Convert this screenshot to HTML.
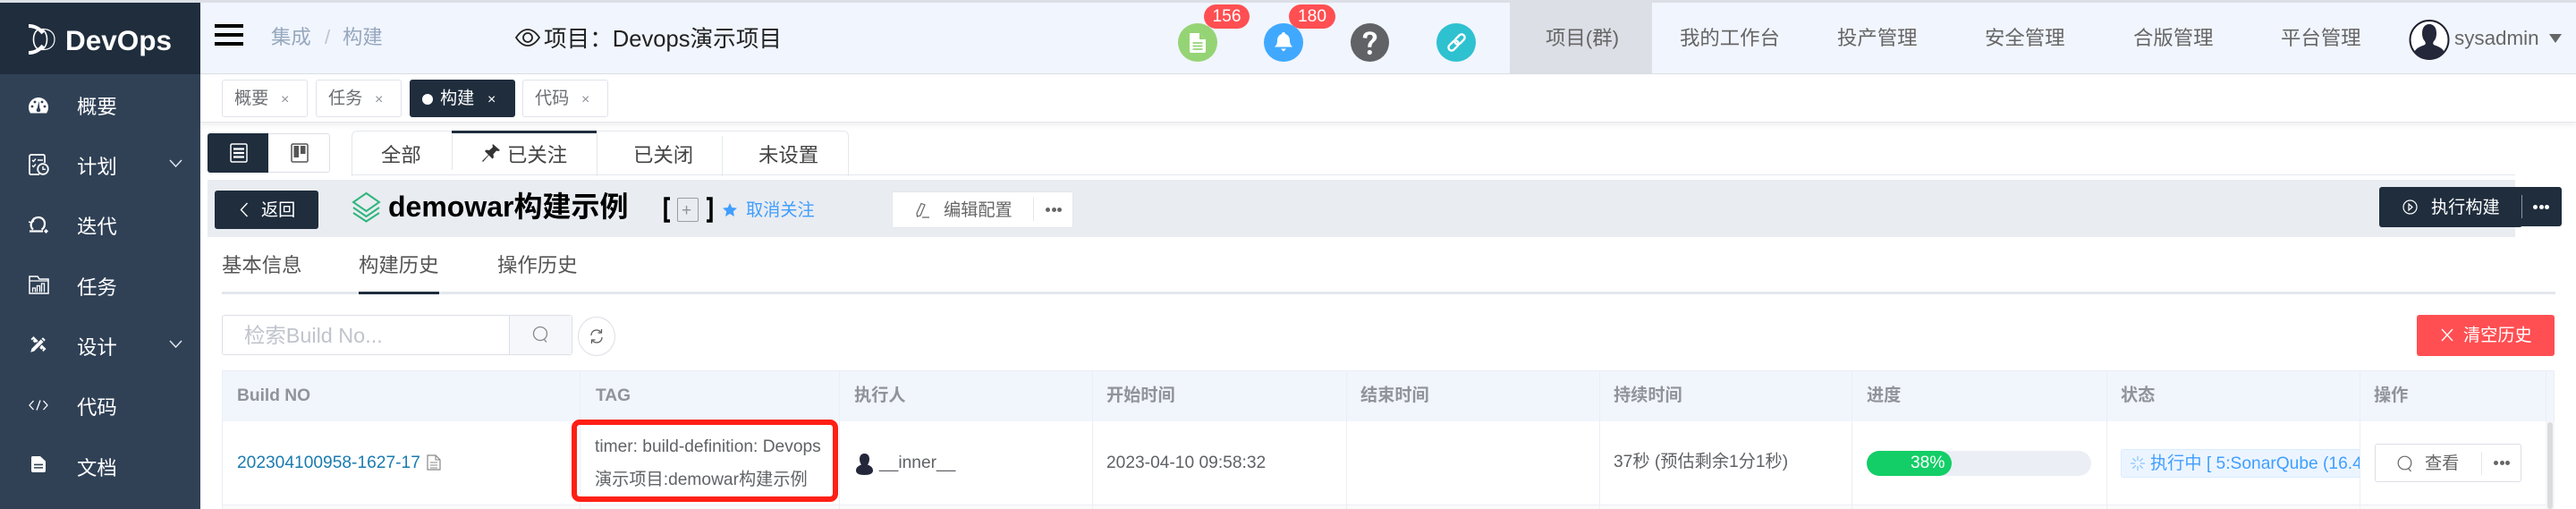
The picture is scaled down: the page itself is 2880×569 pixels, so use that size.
<!DOCTYPE html>
<html lang="zh"><head><meta charset="utf-8"><title>DevOps</title>
<style>
*{box-sizing:border-box}
html,body{margin:0;padding:0;width:2880px;height:569px;overflow:hidden;background:#fff}
body{position:relative;font-family:"Liberation Sans","Noto Sans CJK SC",sans-serif;color:#606266}
.a{position:absolute}
.t{position:absolute;white-space:nowrap;line-height:30px;height:30px}
svg{position:absolute;display:block}
.s{font-size:22.4px;color:#fff}
.m{font-size:22.4px;color:#666}
.tag{position:absolute;top:89px;height:42px;width:96px;border:1px solid #e0e3ea;border-radius:3px;background:#fff}
.th{font-size:19.2px;font-weight:bold;color:#909399}
.td{font-size:19.2px;color:#606266}
.v{position:absolute;width:1px;background:#ebeef5}
.dots{position:absolute;font-size:0}
.dots i{display:inline-block;width:5px;height:5px;border-radius:50%;background:currentColor;margin-right:1.5px}
</style></head><body>

<!-- top strip / header -->
<div class="a" style="left:0;top:0;width:2880px;height:3px;background:#dcdfe6"></div>
<div class="a" style="left:224px;top:3px;width:2656px;height:80px;background:#f1f5fe;border-bottom:1px solid #dcdfe6"></div>

<!-- sidebar -->
<div class="a" style="left:0;top:3px;width:224px;height:80px;background:#1f2d3d"></div>
<div class="a" style="left:0;top:83px;width:224px;height:486px;background:#304156"></div>
<svg style="left:30px;top:26px" width="34" height="36" viewBox="0 0 34 36"><path d="M2 3C9 3 14 6 18 11M2 33C9 33 14 30 18 25" fill="none" stroke="#fff" stroke-width="4"/><ellipse cx="15" cy="18" rx="7.500" ry="11.500" fill="none" stroke="#fff" stroke-width="1.600"/><path d="M17 6.500C26 6 31 11 31 18S26 30 17 29.500" fill="none" stroke="#fff" stroke-width="1.200"/></svg>
<div class="t" style="left:73px;top:30px;font-size:31.5px;font-weight:bold;color:#fff">DevOps</div>

<svg style="left:32px;top:107px" width="22" height="22" viewBox="0 0 22 22"><path d="M11 2C5 2 0 7 0 13c0 3 1 5 2 6.500h18c1-1.500 2-3.500 2-6.500C22 7 17 2 11 2z" fill="#fff"/><circle cx="4" cy="12" r="1.400" fill="#304156"/><circle cx="7" cy="7" r="1.400" fill="#304156"/><circle cx="15" cy="7" r="1.400" fill="#304156"/><circle cx="18" cy="12" r="1.400" fill="#304156"/><path d="M11.500 6l1 9h-3z" fill="#304156"/><circle cx="11" cy="16" r="2.300" fill="#304156"/></svg>
<div class="t s" style="left:86px;top:105px">概要</div>

<svg style="left:32px;top:172px" width="23" height="24" viewBox="0 0 23 24"><path d="M12 23H2.500Q1 23 1 21.500V3Q1 1 3 1h13q2 0 2 2v7" fill="none" stroke="#fff" stroke-width="1.800"/><path d="M4 7l1.500 1.500L8 5.500M4 13l1.500 1.500L8 11.500" fill="none" stroke="#fff" stroke-width="1.400"/><path d="M10 7h6" stroke="#fff" stroke-width="1.500"/><circle cx="16" cy="17" r="5.800" fill="#304156" stroke="#fff" stroke-width="1.800"/><path d="M16 14v3.300h3" fill="none" stroke="#fff" stroke-width="1.400"/></svg>
<div class="t s" style="left:86px;top:172px">计划</div>
<svg style="left:189px;top:178px" width="15" height="10" viewBox="0 0 15 10"><path d="M1 1l6.500 7L14 1" fill="none" stroke="#dfe4ed" stroke-width="1.500"/></svg>

<svg style="left:32px;top:241px" width="23" height="21" viewBox="0 0 23 21"><path d="M5 15.500C2.500 13.500 2 10 3.500 7 5 3.500 8 2 11 2c4 0 7 3 7 7 0 3-1.500 5.500-3.500 6.500" fill="none" stroke="#fff" stroke-width="2.200"/><path d="M0 7l3.500 1L6 5.500" fill="none" stroke="#fff" stroke-width="1.500"/><path d="M1 17.500h15" stroke="#fff" stroke-width="2.200"/><path d="M17 17.500l2.500-2.500 2.500 2.500-2.500 2.500z" fill="#fff"/></svg>
<div class="t s" style="left:86px;top:239px">迭代</div>

<svg style="left:32px;top:307px" width="23" height="22" viewBox="0 0 23 22"><path d="M1 21V2h9l2 3h10v16z" fill="none" stroke="#fff" stroke-width="1.500"/><path d="M1 7h21" stroke="#fff" stroke-width="1.300"/><path d="M4.500 19.500V15h3v4.500M9.500 19.500V12.500h3v7M14.500 19.500v-9.500h3v9.500" fill="none" stroke="#fff" stroke-width="1.300"/></svg>
<div class="t s" style="left:86px;top:307px">任务</div>

<svg style="left:33px;top:375px" width="20" height="20" viewBox="0 0 20 20"><path d="M1.500 4L4.500 1 18.500 15 15.500 18z" fill="#fff"/><path d="M4.500 4.500l-1.500 1.500M7.500 7.500l-1.500 1.500M12 12l-1.500 1.500M15 15l-1.500 1.500" stroke="#304156" stroke-width="1.100"/><path d="M15 1.500l3.500 3.500L5.500 18 0.500 19.500 2 14.500z" fill="#fff" stroke="#304156" stroke-width="1"/><path d="M13 4l3 3" stroke="#304156" stroke-width="1"/></svg>
<div class="t s" style="left:86px;top:374px">设计</div>
<svg style="left:189px;top:380px" width="15" height="10" viewBox="0 0 15 10"><path d="M1 1l6.500 7L14 1" fill="none" stroke="#dfe4ed" stroke-width="1.500"/></svg>

<svg style="left:32px;top:447px" width="22" height="12" viewBox="0 0 22 12"><path d="M5.500 1L1 6l4.500 5M16.500 1L21 6l-4.500 5M13 0.500L9 11.500" fill="none" stroke="#fff" stroke-width="1.300"/></svg>
<div class="t s" style="left:86px;top:441px">代码</div>

<svg style="left:35px;top:510px" width="16" height="18" viewBox="0 0 16 21" preserveAspectRatio="none"><path d="M1.500 0H10l6 6.500V19q0 2-2 2H2q-2 0-2-2V2Q0 0 1.500 0z" fill="#fff"/><path d="M3 11h10M3 15h10" stroke="#304156" stroke-width="1.800"/></svg>
<div class="t s" style="left:86px;top:509px">文档</div>

<!-- header left -->
<div class="a" style="left:240px;top:27px;width:32px;height:4px;background:#000"></div>
<div class="a" style="left:240px;top:37px;width:32px;height:4px;background:#000"></div>
<div class="a" style="left:240px;top:47px;width:32px;height:4px;background:#000"></div>
<div class="t" style="left:303px;top:27px;font-size:22.4px;color:#97a8be">集成</div>
<div class="t" style="left:363px;top:27px;font-size:22.4px;color:#c0c4cc">/</div>
<div class="t" style="left:383px;top:27px;font-size:22.4px;color:#97a8be">构建</div>
<svg style="left:576px;top:32px" width="28" height="20" viewBox="0 0 28 20"><path d="M1 10C5 4 9 1 14 1s9 3 13 9c-4 6-8 9-13 9S5 16 1 10z" fill="none" stroke="#222" stroke-width="1.800"/><circle cx="14" cy="10" r="5" fill="none" stroke="#222" stroke-width="1.800"/></svg>
<div class="t" style="left:608px;top:29px;font-size:25.6px;color:#222">项目：Devops演示项目</div>

<!-- header icons -->
<div class="a" style="left:1317px;top:26px;width:44px;height:43px;border-radius:50%;background:#95d475"></div>
<svg style="left:1330px;top:37px" width="18" height="22" viewBox="0 0 18 22"><path d="M1 0h10l7 7v13q0 2-2 2H2q-2 0-2-2V1Q0 0 1 0z" fill="#fff"/><path d="M11 0v7h7" fill="#95d475"/><path d="M3.500 11h11M3.500 14.500h11M3.500 18h11" stroke="#95d475" stroke-width="1.700"/></svg>
<div class="a" style="left:1346px;top:5px;width:51px;height:27px;border-radius:14px;background:#ff4f52;color:#fff;font-size:19.2px;line-height:27px;text-align:center">156</div>

<div class="a" style="left:1413px;top:26px;width:44px;height:43px;border-radius:50%;background:#40a9ff"></div>
<svg style="left:1425px;top:36px" width="20" height="23" viewBox="0 0 20 23"><path d="M10 0c1.200 0 2 .8 2 2 3.500 1 5 4 5 7.500 0 3 1 5 3 7H0c2-2 3-4 3-7C3 6 4.500 3 8 2c0-1.200.8-2 2-2z" fill="#fff"/><path d="M7 18.500h6l-3 3z" fill="#fff"/></svg>
<div class="a" style="left:1441px;top:5px;width:52px;height:27px;border-radius:14px;background:#ff4f52;color:#fff;font-size:19.2px;line-height:27px;text-align:center">180</div>

<div class="a" style="left:1510px;top:26px;width:43px;height:43px;border-radius:50%;background:#606266"></div>
<svg style="left:1521px;top:33px" width="21" height="30" viewBox="0 0 21 30"><path d="M3 9c0-4 3-6.500 7.500-6.500S18 5 18 8.500c0 5-6 5-6 11h-3.500c0-7 5.500-7 5.500-11 0-1.800-1.500-3-3.500-3S7 7 7 9.500z" fill="#fff" stroke="#fff" stroke-width=".6"/><circle cx="10.300" cy="25.500" r="2.600" fill="#fff"/></svg>

<div class="a" style="left:1606px;top:26px;width:44px;height:43px;border-radius:50%;background:#2ec1d0"></div>
<svg style="left:1616px;top:36px" width="24" height="24" viewBox="0 0 24 24"><g fill="none" stroke="#fff" stroke-width="2.400"><rect x="-4" y="-3.500" width="13" height="7" rx="3.500" transform="translate(8 16) rotate(-45) translate(-1 0)"/><rect x="-6.500" y="-3.500" width="13" height="7" rx="3.500" transform="translate(16 8) rotate(-45)"/></g></svg>

<!-- header menu -->
<div class="a" style="left:1688px;top:3px;width:159px;height:79px;background:#dcdfe6"></div>
<div class="t m" style="left:1728px;top:28px">项目(群)</div>
<div class="t m" style="left:1878px;top:28px">我的工作台</div>
<div class="t m" style="left:2054px;top:28px">投产管理</div>
<div class="t m" style="left:2219px;top:28px">安全管理</div>
<div class="t m" style="left:2385px;top:28px">合版管理</div>
<div class="t m" style="left:2550px;top:28px">平台管理</div>
<svg style="left:2693px;top:22px" width="46" height="45" viewBox="0 0 46 45"><circle cx="23" cy="22.500" r="21.500" fill="#fff" stroke="#1f1f2e" stroke-width="2"/><path d="M6 37c2-6 8-7 12-9 1-1 1-2 0-4-2-2-3-5-3-9 0-6 3-10 8-10s8 4 8 10c0 4-1 7-3 9-1 2-1 3 0 4 4 2 10 3 12 9-4 5-10 7.500-17 7.500S10 42 6 37z" fill="#24263a"/></svg>
<div class="t m" style="left:2744px;top:28px">sysadmin</div>
<svg style="left:2850px;top:38px" width="14" height="10" viewBox="0 0 14 10"><path d="M0 0h14L7 10z" fill="#666"/></svg>

<!-- tags bar -->
<div class="a" style="left:224px;top:83px;width:2656px;height:54px;background:#fff;border-bottom:1px solid #e4e7ed;box-shadow:0 3px 6px rgba(0,0,0,.07)"></div>
<div class="tag" style="left:248px"></div>
<div class="t td" style="left:262px;top:96px;color:#6b6e73">概要</div>
<div class="t" style="left:314px;top:97px;font-size:16px;color:#909399">×</div>
<div class="tag" style="left:353px"></div>
<div class="t td" style="left:367px;top:96px;color:#6b6e73">任务</div>
<div class="t" style="left:419px;top:97px;font-size:16px;color:#909399">×</div>
<div class="tag" style="left:458px;width:118px;background:#1f2d3d;border-color:#1f2d3d"></div>
<div class="a" style="left:472px;top:105px;width:12px;height:12px;border-radius:50%;background:#fff"></div>
<div class="t td" style="left:492px;top:96px;color:#fff">构建</div>
<div class="t" style="left:545px;top:97px;font-size:16px;color:#fff">×</div>
<div class="tag" style="left:584px"></div>
<div class="t td" style="left:598px;top:96px;color:#6b6e73">代码</div>
<div class="t" style="left:650px;top:97px;font-size:16px;color:#909399">×</div>

<!-- view toggle -->
<div class="a" style="left:232px;top:149px;width:137px;height:44px;border:1px solid #dcdfe6;border-radius:3px;background:#fff"></div>
<div class="a" style="left:232px;top:149px;width:68px;height:44px;background:#1f2d3d;border-radius:3px 0 0 3px"></div>
<svg style="left:257px;top:160px" width="20" height="22" viewBox="0 0 20 22"><rect x="1" y="1" width="18" height="20" rx="1.500" fill="none" stroke="#fff" stroke-width="1.500"/><path d="M4 6.500h12M4 11h12M4 15.500h12" stroke="#fff" stroke-width="2.200"/></svg>
<svg style="left:325px;top:160px" width="20" height="22" viewBox="0 0 20 22"><rect x="1" y="1" width="18" height="20" rx="1.500" fill="none" stroke="#555" stroke-width="1.500"/><path d="M3.500 3h5.500v13H3.500zM11 3h5.500v9H11z" fill="#555"/></svg>

<!-- status tabs -->
<div class="a" style="left:393px;top:146px;width:556px;height:51px;border:1px solid #e4e7ed;border-bottom:0;border-radius:6px 6px 0 0"></div>
<div class="a" style="left:393px;top:195px;width:2419px;height:1px;background:#e4e7ed"></div>
<div class="a" style="left:505px;top:146px;width:162px;height:3px;background:#1f2d3d"></div>
<div class="v" style="left:505px;top:149px;height:41px;background:#e4e7ed"></div>
<div class="v" style="left:667px;top:149px;height:48px;background:#e4e7ed"></div>
<div class="v" style="left:807px;top:152px;height:45px;background:#e4e7ed"></div>
<div class="t m" style="left:426px;top:159px;color:#444">全部</div>
<svg style="left:539px;top:161px" width="20" height="21" viewBox="0 0 20 21"><path d="M12 0l8 7-2 1-2-.5-3.500 4 .5 3.500-1.500 1.500-4-4L1 20l-1-1 7-7L3 8l1.500-1.500 3.500.5 4-3.500-.5-2z" fill="#333"/></svg>
<div class="t m" style="left:567px;top:159px;color:#444">已关注</div>
<div class="t m" style="left:708px;top:159px;color:#444">已关闭</div>
<div class="t m" style="left:848px;top:159px;color:#444">未设置</div>

<!-- title bar -->
<div class="a" style="left:232px;top:201px;width:2580px;height:64px;background:#e9ecf1"></div>
<div class="a" style="left:240px;top:213px;width:116px;height:43px;background:#1f2d3d;border-radius:3px"></div>
<svg style="left:268px;top:226px" width="10" height="17" viewBox="0 0 10 17"><path d="M8.500 1L1.500 8.500l7 7.500" fill="none" stroke="#fff" stroke-width="1.400"/></svg>
<div class="t td" style="left:292px;top:221px;color:#fff">返回</div>
<svg style="left:393px;top:214px" width="33" height="35" viewBox="0 0 33 35"><g fill="none" stroke="#2fb67c" stroke-width="2"><path d="M16.500 2L31 12 16.500 22 2 12z"/><path d="M2 18l14.500 10L31 18"/><path d="M2 24l14.500 9.500L31 24"/></g></svg>
<div class="t" style="left:434px;top:216px;font-size:32px;font-weight:bold;color:#000">demowar构建示例</div>
<svg style="left:742px;top:220px" width="55" height="29" viewBox="0 0 55 29"><path d="M7 2H2v25h5M48 2h5v25h-5" fill="none" stroke="#000" stroke-width="3.500"/></svg>
<div class="a" style="left:757px;top:221px;width:24px;height:27px;border:1px solid #9a9da3;border-radius:2px"></div>
<div class="t" style="left:762px;top:221px;font-size:19px;color:#909399">+</div>
<svg style="left:808px;top:227px" width="16" height="15" viewBox="0 0 16 15"><path d="M8 0l2.300 5 5.700.6-4.200 3.800L13 15 8 12l-5 3 1.200-5.600L0 5.600 5.700 5z" fill="#409eff"/></svg>
<div class="t td" style="left:834px;top:221px;color:#409eff">取消关注</div>
<div class="a" style="left:997px;top:214px;width:203px;height:41px;background:#fff;border:1px solid #e4e7ed;border-radius:3px"></div>
<svg style="left:1023px;top:226px" width="17" height="18" viewBox="0 0 17 18"><path d="M7 1.500l4 1.500-5 12-3.500 1-.5-3.500zM8 17h8" fill="none" stroke="#666" stroke-width="1.200"/></svg>
<div class="t td" style="left:1055px;top:221px;color:#666">编辑配置</div>
<div class="v" style="left:1155px;top:221px;height:26px;background:#e4e7ed"></div>
<div class="dots" style="left:1169px;top:232px;color:#666;width:22px"><i></i><i></i><i></i></div>

<div class="a" style="left:2660px;top:209px;width:204px;height:44px;background:#1f2d3d;border-radius:3px"></div>
<div class="a" style="left:2660px;top:245px;width:160px;height:9px;background:#1f2d3d;border-radius:0 0 3px 3px"></div>
<svg style="left:2686px;top:223px" width="17" height="17" viewBox="0 0 17 17"><circle cx="8.500" cy="8.500" r="7.500" fill="none" stroke="#fff" stroke-width="1.200"/><path d="M7 5l4 3.500L7 12z" fill="none" stroke="#fff" stroke-width="1.200"/></svg>
<div class="t td" style="left:2718px;top:218px;color:#fff">执行构建</div>
<div class="v" style="left:2819px;top:218px;height:26px;background:#8a94a0"></div>
<div class="dots" style="left:2832px;top:229px;color:#fff;width:22px"><i></i><i></i><i></i></div>

<!-- sub tabs -->
<div class="t m" style="left:248px;top:282px;color:#555">基本信息</div>
<div class="t m" style="left:401px;top:282px;color:#555">构建历史</div>
<div class="t m" style="left:556px;top:282px;color:#555">操作历史</div>
<div class="a" style="left:248px;top:326px;width:2609px;height:3px;background:#e4e7ed"></div>
<div class="a" style="left:401px;top:326px;width:90px;height:3px;background:#1f2d3d"></div>

<!-- search -->
<div class="a" style="left:248px;top:352px;width:392px;height:45px;border:1px solid #dcdfe6;border-radius:3px;background:#fff"></div>
<div class="a" style="left:569px;top:353px;width:70px;height:43px;background:#f5f7fa;border-left:1px solid #dcdfe6"></div>
<div class="t" style="left:273px;top:360px;font-size:23.4px;color:#c0c4cc">检索Build No...</div>
<svg style="left:595px;top:364px" width="19" height="20" viewBox="0 0 19 20"><circle cx="9" cy="9" r="7.500" fill="none" stroke="#888" stroke-width="1.300"/><path d="M13 15l3 3.500" stroke="#888" stroke-width="1.300"/></svg>
<div class="a" style="left:646px;top:354px;width:42px;height:44px;border:1px solid #dcdfe6;border-radius:50%;background:#fff"></div>
<svg style="left:659px;top:367px" width="16" height="18" viewBox="0 0 16 18"><path d="M2 8c0-3.500 2.500-6 6-6 2 0 3.500.8 4.500 2.200M14 10c0 3.500-2.500 6-6 6-2 0-3.500-.8-4.500-2.200" fill="none" stroke="#555" stroke-width="1.200"/><path d="M13.500 1v4h-4M2.500 17v-4h4" fill="none" stroke="#555" stroke-width="1.200"/></svg>

<div class="a" style="left:2702px;top:352px;width:154px;height:46px;background:#ff4f52;border-radius:3px"></div>
<svg style="left:2729px;top:367px" width="14" height="15" viewBox="0 0 14 15"><path d="M1 1l12 13M13 1L1 14" stroke="#fff" stroke-width="1.400"/></svg>
<div class="t td" style="left:2754px;top:361px;color:#fff">清空历史</div>

<!-- table -->
<div class="a" style="left:248px;top:414px;width:2608px;height:58px;background:#f1f5fc;border:1px solid #ebeef5"></div>
<div class="a" style="left:248px;top:471px;width:2598px;height:94px;background:#fff;border-bottom:1px solid #ebeef5"></div>
<div class="a" style="left:248px;top:565px;width:2598px;height:4px;background:#fafafa"></div>
<div class="v" style="left:248px;top:414px;height:155px"></div>
<div class="v" style="left:648px;top:414px;height:155px"></div>
<div class="v" style="left:938px;top:414px;height:155px"></div>
<div class="v" style="left:1221px;top:414px;height:155px"></div>
<div class="v" style="left:1505px;top:414px;height:155px"></div>
<div class="v" style="left:1788px;top:414px;height:155px"></div>
<div class="v" style="left:2070px;top:414px;height:155px"></div>
<div class="v" style="left:2355px;top:414px;height:155px"></div>
<div class="v" style="left:2638px;top:414px;height:155px"></div>
<div class="v" style="left:2846px;top:414px;height:155px"></div>
<div class="a" style="left:2846px;top:471px;width:10px;height:98px;background:#f5f6f8"></div>
<div class="a" style="left:2848px;top:472px;width:6px;height:97px;background:#dcdcdc;border-radius:3px"></div>

<div class="t th" style="left:265px;top:428px">Build NO</div>
<div class="t th" style="left:666px;top:428px">TAG</div>
<div class="t th" style="left:955px;top:428px">执行人</div>
<div class="t th" style="left:1237px;top:428px">开始时间</div>
<div class="t th" style="left:1521px;top:428px">结束时间</div>
<div class="t th" style="left:1804px;top:428px">持续时间</div>
<div class="t th" style="left:2087px;top:428px">进度</div>
<div class="t th" style="left:2371px;top:428px">状态</div>
<div class="t th" style="left:2654px;top:428px">操作</div>

<div class="t td" style="left:265px;top:503px;color:#1a7bb0">202304100958-1627-17</div>
<svg style="left:477px;top:508px" width="16" height="18" viewBox="0 0 16 18"><path d="M1 1h9l5 5v11H1z" fill="none" stroke="#888" stroke-width="1.200"/><path d="M10 1v5h5M4 9h8M4 12h8M4 15h8" fill="none" stroke="#888" stroke-width="1.100"/></svg>

<div class="t td" style="left:665px;top:485px">timer: build-definition: Devops</div>
<div class="t td" style="left:665px;top:522px">演示项目:demowar构建示例</div>
<div class="a" style="left:639px;top:469px;width:298px;height:92px;border:6px solid #ff1f14;border-radius:9px"></div>

<svg style="left:957px;top:507px" width="19" height="24" viewBox="0 0 19 24"><path d="M9.500 0c3.500 0 5.500 2.500 5.500 6 0 3-1 5-2 6.500 3 1 6 3 6 6.500s-4 5-9.500 5S0 22.500 0 19s3-5.500 6-6.500C5 11 4 9 4 6c0-3.500 2-6 5.500-6z" fill="#24263a"/></svg>
<div class="t td" style="left:983px;top:503px">__inner__</div>
<div class="t td" style="left:1237px;top:503px">2023-04-10 09:58:32</div>
<div class="t td" style="left:1804px;top:502px">37秒 (预估剩余1分1秒)</div>

<div class="a" style="left:2087px;top:504px;width:251px;height:28px;background:#ebeef5;border-radius:14px"></div>
<div class="a" style="left:2087px;top:504px;width:95px;height:28px;background:#13ce66;border-radius:14px"></div>
<div class="t td" style="left:2136px;top:503px;color:#fff">38%</div>

<div class="a" style="left:2371px;top:502px;width:267px;height:32px;background:#ecf5ff;border:1px solid #d9ecff;border-right:0;border-radius:3px 0 0 3px;overflow:hidden">
<svg style="left:9px;top:6px" width="18" height="18" viewBox="0 0 18 18"><path d="M9 1v5M9 12v5M1 9h5M12 9h5M3.300 3.300l3.500 3.500M11.200 11.200l3.500 3.500M14.700 3.300l-3.500 3.500M6.800 11.200l-3.500 3.500" stroke="#8cc5ff" stroke-width="1.300"/></svg>
<div class="t td" style="left:32px;top:1px;color:#409eff">执行中 [ 5:SonarQube (16.4%) ]</div>
</div>

<div class="a" style="left:2655px;top:496px;width:164px;height:43px;background:#fff;border:1px solid #dcdfe6;border-radius:3px"></div>
<svg style="left:2680px;top:509px" width="18" height="19" viewBox="0 0 18 19"><circle cx="8.500" cy="8.500" r="7.300" fill="none" stroke="#666" stroke-width="1.200"/><path d="M12.500 14.500l3 3.500" stroke="#666" stroke-width="1.200"/></svg>
<div class="t td" style="left:2711px;top:504px;color:#666">查看</div>
<div class="v" style="left:2774px;top:505px;height:26px;background:#e4e7ed"></div>
<div class="dots" style="left:2788px;top:515px;color:#666;width:22px"><i></i><i></i><i></i></div>

</body></html>
